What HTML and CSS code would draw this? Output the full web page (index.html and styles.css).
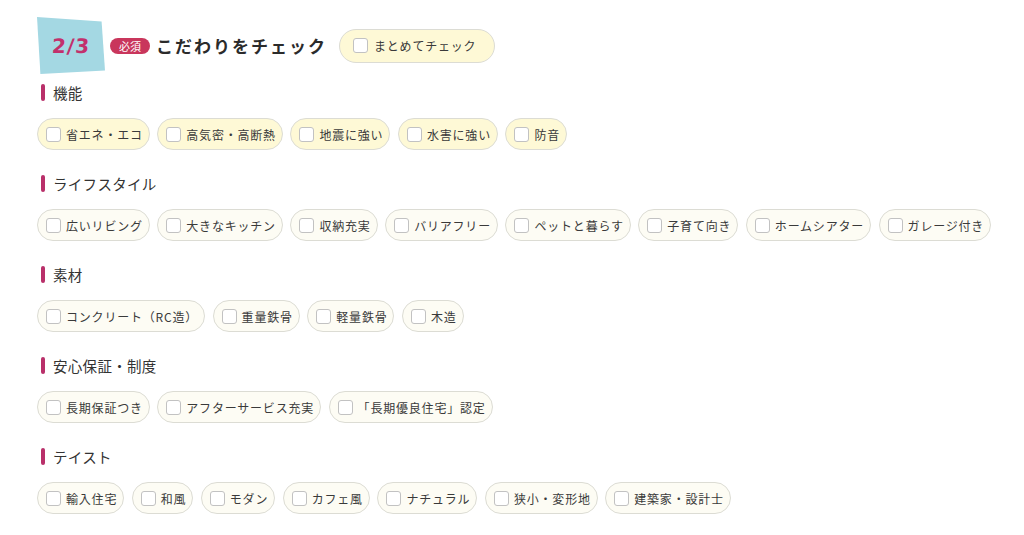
FILE: index.html
```html
<!DOCTYPE html>
<html lang="ja">
<head>
<meta charset="utf-8">
<link rel="stylesheet" href="styles.css">
</head>
<body>
<div class="page">
  <div class="head">
    <div class="step"><span>2/3</span></div>
    <span class="req">必須</span>
    <h1 class="title">こだわりをチェック</h1>
    <label class="chip chip-all"><span class="cb"></span>まとめてチェック</label>
  </div>

  <section class="sec">
    <h2 class="sec-h">機能</h2>
    <div class="chips">
      <label class="chip hl"><span class="cb"></span>省エネ・エコ</label>
      <label class="chip hl"><span class="cb"></span>高気密・高断熱</label>
      <label class="chip hl"><span class="cb"></span>地震に強い</label>
      <label class="chip hl"><span class="cb"></span>水害に強い</label>
      <label class="chip hl"><span class="cb"></span>防音</label>
    </div>
  </section>

  <section class="sec">
    <h2 class="sec-h">ライフスタイル</h2>
    <div class="chips">
      <label class="chip"><span class="cb"></span>広いリビング</label>
      <label class="chip"><span class="cb"></span>大きなキッチン</label>
      <label class="chip"><span class="cb"></span>収納充実</label>
      <label class="chip"><span class="cb"></span>バリアフリー</label>
      <label class="chip"><span class="cb"></span>ペットと暮らす</label>
      <label class="chip"><span class="cb"></span>子育て向き</label>
      <label class="chip"><span class="cb"></span>ホームシアター</label>
      <label class="chip"><span class="cb"></span>ガレージ付き</label>
    </div>
  </section>

  <section class="sec">
    <h2 class="sec-h">素材</h2>
    <div class="chips">
      <label class="chip"><span class="cb"></span>コンクリート（RC造）</label>
      <label class="chip"><span class="cb"></span>重量鉄骨</label>
      <label class="chip"><span class="cb"></span>軽量鉄骨</label>
      <label class="chip"><span class="cb"></span>木造</label>
    </div>
  </section>

  <section class="sec">
    <h2 class="sec-h">安心保証・制度</h2>
    <div class="chips">
      <label class="chip"><span class="cb"></span>長期保証つき</label>
      <label class="chip"><span class="cb"></span>アフターサービス充実</label>
      <label class="chip"><span class="cb"></span>「長期優良住宅」認定</label>
    </div>
  </section>

  <section class="sec">
    <h2 class="sec-h">テイスト</h2>
    <div class="chips">
      <label class="chip"><span class="cb"></span>輸入住宅</label>
      <label class="chip"><span class="cb"></span>和風</label>
      <label class="chip"><span class="cb"></span>モダン</label>
      <label class="chip"><span class="cb"></span>カフェ風</label>
      <label class="chip"><span class="cb"></span>ナチュラル</label>
      <label class="chip"><span class="cb"></span>狭小・変形地</label>
      <label class="chip"><span class="cb"></span>建築家・設計士</label>
    </div>
  </section>
</div>
</body>
</html>
```

FILE: styles.css
```css
* { box-sizing: border-box; }
html, body { margin: 0; padding: 0; background: #fff; }
body {
  font-family: "Noto Sans CJK JP", "Noto Sans", sans-serif;
  color: #333;
}
.page {
  padding: 17px 0 0 37px;
}
.head {
  display: flex;
  align-items: center;
  height: 57px;
}
.step {
  width: 68px;
  height: 57px;
  background: #a4d8e3;
  clip-path: polygon(0 0, 95% 8%, 100% 94%, 5% 100%);
  display: flex;
  align-items: center;
  justify-content: center;
  padding-top: 1px;
}
.step span {
  font-family: "DejaVu Sans", sans-serif;
  font-weight: 700;
  font-size: 20px;
  color: #c2306c;
  letter-spacing: 1px;
  transform: skewX(-4deg);
}
.req {
  margin-left: 5px;
  background: #c9365c;
  color: #fff;
  font-size: 11px;
  line-height: 16px;
  height: 16px;
  padding: 0 9px;
  border-radius: 8px;
}
.title {
  margin: 0 0 0 6px;
  font-size: 17px;
  font-weight: 700;
  letter-spacing: 2px;
  color: #2b2b2b;
}
.chip {
  display: inline-flex;
  align-items: center;
  height: 32px;
  padding: 0 6px 0 8px;
  border: 1px solid #dcdcd4;
  border-radius: 16px;
  background: #fdfcf4;
  font-size: 12px;
  letter-spacing: 0.8px;
  color: #3a3a3a;
  white-space: nowrap;
}
.chip.hl { background: #fef9d6; }
.chip-all {
  margin-left: 12px;
  height: 34px;
  border-radius: 17px;
  padding: 0 18px 0 13px;
  background: #fef9d6;
  letter-spacing: 0.8px;
}
.chip-all .cb { margin-right: 6px; }
.cb {
  width: 15px;
  height: 15px;
  border: 1.5px solid #c2c2c2;
  border-radius: 3px;
  background: #fff;
  margin-right: 5px;
  flex: none;
}
.sec { margin-top: 9px; }
.sec + .sec { margin-top: 24px; }
.sec-h {
  margin: 0 0 17px 4px;
  display: flex;
  align-items: center;
  gap: 8px;
  height: 18px;
  font-size: 14.5px;
  font-weight: 400;
  color: #333;
  letter-spacing: 0.3px;
}
.sec-h::before {
  content: "";
  width: 4px;
  height: 17px;
  border-radius: 2px;
  background: #b9306a;
}
.chips {
  display: flex;
  flex-wrap: wrap;
  gap: 7.5px;
}
```
